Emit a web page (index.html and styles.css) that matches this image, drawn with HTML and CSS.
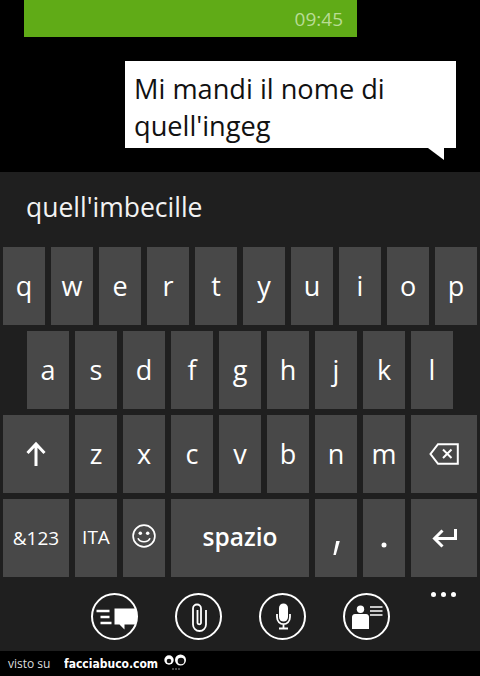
FILE: index.html
```html
<!DOCTYPE html>
<html lang="it">
<head>
<meta charset="utf-8">
<title>Messaggi</title>
<link rel="stylesheet" href="styles.css">
</head>
<body>
<main class="screen">
  <section class="chat">
    <div class="sent"><span class="time">09:45</span></div>
    <div class="bubble">
      <p class="bubble-text">Mi mandi il nome di<br>quell'ingeg</p>
      <svg class="tail" width="16" height="12" viewBox="0 0 16 12"><path d="M0 0H16V12Z" fill="#fff"/></svg>
    </div>
  </section>
  <section class="panel">
    <div class="input">quell'imbecille</div>
    <div class="keyboard">
      <div class="row">
        <div class="key">q</div><div class="key">w</div><div class="key">e</div><div class="key">r</div><div class="key">t</div><div class="key">y</div><div class="key">u</div><div class="key">i</div><div class="key">o</div><div class="key">p</div>
      </div>
      <div class="row row-home">
        <div class="key">a</div><div class="key">s</div><div class="key">d</div><div class="key">f</div><div class="key">g</div><div class="key">h</div><div class="key">j</div><div class="key">k</div><div class="key">l</div>
      </div>
      <div class="row">
        <div class="key key-wide"><svg width="20" height="26" viewBox="0 0 20 26"><path d="M10 25V3M1.500 12L10 3L18.500 12" fill="none" stroke="#fff" stroke-width="3"/></svg></div>
        <div class="key">z</div><div class="key">x</div><div class="key">c</div><div class="key">v</div><div class="key">b</div><div class="key">n</div><div class="key">m</div>
        <div class="key key-wide"><svg width="30" height="22" viewBox="0 0 30 22"><path d="M9 1.200H28.800V20.800H9L1.500 11Z" fill="none" stroke="#fff" stroke-width="2"/><path d="M14 6.500L22.500 15M22.500 6.500L14 15" fill="none" stroke="#fff" stroke-width="2"/></svg></div>
      </div>
      <div class="row">
        <div class="key key-wide key-small">&amp;123</div>
        <div class="key key-small">ITA</div>
        <div class="key key-smile"><svg width="24" height="24" viewBox="0 0 26 26"><circle cx="13" cy="13" r="11.800" fill="none" stroke="#fff" stroke-width="1.800"/><circle cx="9" cy="10" r="1.900" fill="#fff"/><circle cx="17" cy="10" r="1.900" fill="#fff"/><path d="M6.500 15.500C8.500 20.500 17.500 20.500 19.500 15.500" fill="none" stroke="#fff" stroke-width="1.800"/></svg></div>
        <div class="key key-space">spazio</div>
        <div class="key key-comma"><svg width="7" height="14" viewBox="0 0 7 14"><path d="M3.200 0H6.800L2.800 14H0.400Z" fill="#fff"/></svg></div>
        <div class="key key-dot"><svg width="6" height="6" viewBox="0 0 6 6"><circle cx="3" cy="3" r="2.500" fill="#fff"/></svg></div>
        <div class="key key-wide"><svg width="25" height="19" viewBox="0 0 25 19"><path d="M23.500 0V9.500H3M10.500 1.500L2.500 9.500L10.500 17.500" fill="none" stroke="#fff" stroke-width="3"/></svg></div>
      </div>
    </div>
    <div class="appbar">
      <span class="round"><svg width="42" height="42" viewBox="0 0 42 42"><path d="M2.500 15H15.500M6.500 21H15.500M6.500 27H17.500" stroke="#fff" stroke-width="2.400" fill="none"/><path d="M20.500 12.500H42V28.500H30.500V33.500L25.500 28.500H20.500Z" fill="#fff"/></svg></span>
      <span class="round"><svg width="42" height="42" viewBox="0 0 42 42"><path d="M28 14V28.500A6.500 6.500 0 0 1 15 28.500V12.500A4 4 0 0 1 23 12.500V27A1.800 1.800 0 0 1 19.500 27V14" fill="none" stroke="#fff" stroke-width="1.800"/></svg></span>
      <span class="round"><svg width="42" height="42" viewBox="0 0 42 42"><rect x="17" y="7.500" width="9" height="18" rx="4.500" fill="#fff"/><path d="M15 18V21C15 30.500 28 30.500 28 21V18M21.500 28V32.500M17 32.500H26" fill="none" stroke="#fff" stroke-width="1.800"/></svg></span>
      <span class="round"><svg width="42" height="42" viewBox="0 0 42 42"><circle cx="14.500" cy="13.200" r="3.700" fill="#fff"/><path d="M9 18H20C22 18 23 19.500 23 21L23 33H6V21C6 19.500 7 18 9 18Z" fill="#fff"/><path d="M24 11H36.500M24 15H36.500M24 19H36.500" stroke="#fff" stroke-width="1.700" fill="none"/></svg></span>
      <span class="dots"><i class="dot"></i><i class="dot"></i><i class="dot"></i></span>
    </div>
  </section>
  <footer class="footer">
    <span class="visto">visto su</span>
    <span class="brand">facciabuco.com</span>
    <svg class="eyes" width="23" height="17" viewBox="0 0 23 17"><circle cx="5" cy="6" r="4.700" fill="#fff"/><circle cx="16.500" cy="6" r="5.500" fill="#fff"/><circle cx="5" cy="7" r="2.300" fill="#111"/><circle cx="17" cy="7" r="3.300" fill="#111"/><path d="M8 15H16" stroke="#999" stroke-width="1" stroke-dasharray="2 1"/></svg>
  </footer>
</main>
</body>
</html>
```
FILE: styles.css
```css
* { box-sizing: border-box; }
html, body { margin: 0; padding: 0; background: #000; }
.screen { width: 480px; height: 676px; overflow: hidden; display: flex; flex-direction: column; font-family: "Open Sans", "Noto Sans", sans-serif; }

.chat { height: 172px; padding-left: 24px; }
.sent { width: 333px; height: 37px; background: #60ab17; display: flex; justify-content: flex-end; align-items: center; padding-right: 14px; }
.time { color: #b9dc95; font-size: 19px; }
.bubble { position: relative; margin: 24px 0 0 101px; width: 331px; height: 87px; background: #fff; padding: 9px 9px; }
.bubble-text { margin: 0; color: #111; font-size: 27.200px; line-height: 37px; }
.tail { position: absolute; right: 12px; top: 87px; }

.panel { position: relative; height: 479px; background: #1f1f1f; display: flex; flex-direction: column; }
.input { height: 75px; padding: 16px 0 0 26px; color: #f2f2f2; font-size: 26.500px; line-height: 38px; }
.keyboard { display: flex; flex-direction: column; gap: 6px; padding-left: 3px; }
.row { display: flex; gap: 6px; }
.row-home { padding-left: 24px; }
.key { width: 42px; height: 78px; background: #484848; color: #fff; display: flex; align-items: center; justify-content: center; font-size: 27px; font-weight: 500; padding-bottom: 2px; }
.key-wide { width: 66px; padding-bottom: 0; }
.key-space { width: 138px; font-size: 24.500px; font-weight: 600; padding-bottom: 3px; }
.key-small { font-size: 19px; font-weight: 500; }
.key-smile { padding-bottom: 4px; }
.key-comma { padding: 19px 0 0; }
.key-dot { padding: 14px 0 0; }

.appbar { position: relative; display: flex; padding: 16px 0 0 91px; gap: 37px; }
.round { width: 47px; height: 47px; border: 2.500px solid #fff; border-radius: 50%; display: flex; align-items: center; justify-content: center; }
.round svg { flex: none; }
.dots { position: absolute; left: 431px; top: 15px; display: flex; gap: 5px; }
.dot { width: 5px; height: 5px; border-radius: 50%; background: #fff; }

.footer { flex: 1; display: flex; align-items: center; padding-left: 8px; color: #fff; }
.visto { font-size: 12px; color: #ddd; width: 56px; }
.brand { font-family: "DejaVu Sans", sans-serif; font-weight: 700; font-size: 13px; width: 100px; white-space: nowrap; transform: scaleX(0.830); transform-origin: left center; }
.eyes { margin: -3px 0 0 0; }
```
